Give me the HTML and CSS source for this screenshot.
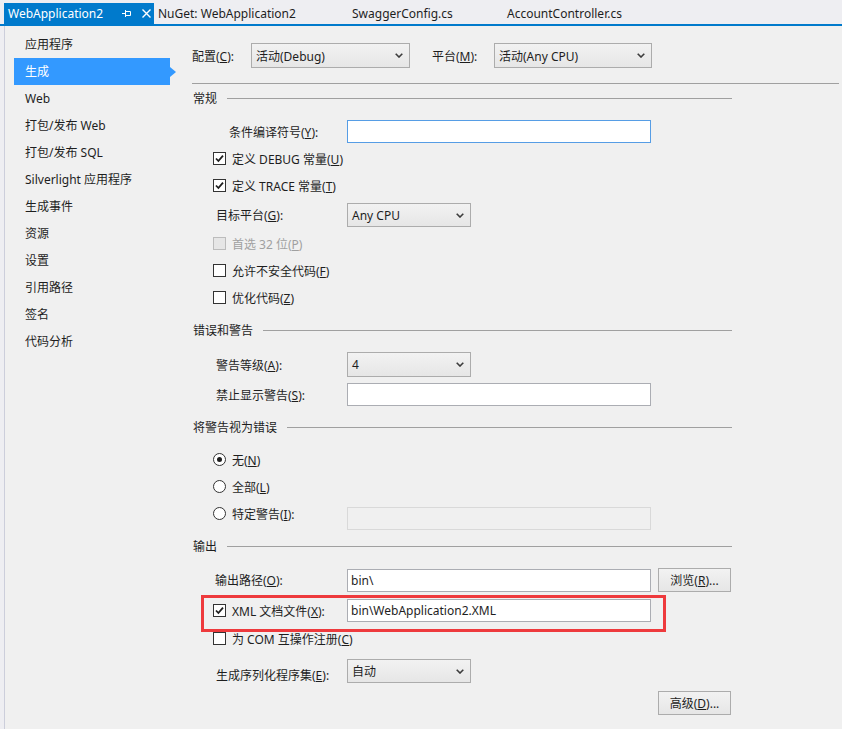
FILE: index.html
```html
<!DOCTYPE html>
<html lang="zh-CN">
<head>
<meta charset="utf-8">
<title>WebApplication2</title>
<link rel="stylesheet" href="styles.css">
</head>
<body>
<div class="tabs">
  <div class="tab tab-active">
    <span class="tab-title">WebApplication2</span>
    <svg class="tab-pin" width="10" height="9" viewBox="0 0 10 9"><path d="M0 4.5H3.5M3.5 1V8M3.5 2.5H8.5V6.5H3.5" fill="none" stroke="#fff" stroke-width="1"/></svg>
    <svg class="tab-close" width="9" height="9" viewBox="0 0 9 9"><path d="M0.5 0.5L8.5 8.5M8.5 0.5L0.5 8.5" fill="none" stroke="#fff" stroke-width="1.4"/></svg>
  </div>
  <div class="tab tab-nuget">NuGet: WebApplication2</div>
  <div class="tab tab-swagger">SwaggerConfig.cs</div>
  <div class="tab tab-account">AccountController.cs</div>
</div>
<div class="frame">
  <nav class="side">
    <div class="nav-item">应用程序</div>
    <div class="nav-item nav-selected">生成</div>
    <div class="nav-item">Web</div>
    <div class="nav-item">打包/发布 Web</div>
    <div class="nav-item">打包/发布 SQL</div>
    <div class="nav-item">Silverlight 应用程序</div>
    <div class="nav-item">生成事件</div>
    <div class="nav-item">资源</div>
    <div class="nav-item">设置</div>
    <div class="nav-item">引用路径</div>
    <div class="nav-item">签名</div>
    <div class="nav-item">代码分析</div>
  </nav>
  <main class="page">
    <div class="top-row">
      <span class="top-lbl lbl-config">配置(<u>C</u>):</span>
      <div class="select select-config"><span>活动(Debug)</span><svg class="chev" width="8" height="5" viewBox="0 0 8 5"><path d="M0.7 0.7L4 4L7.3 0.7" fill="none" stroke="#3c3c3c" stroke-width="1.6"/></svg></div>
      <span class="top-lbl lbl-platform">平台(<u>M</u>):</span>
      <div class="select select-platform"><span>活动(Any CPU)</span><svg class="chev" width="8" height="5" viewBox="0 0 8 5"><path d="M0.7 0.7L4 4L7.3 0.7" fill="none" stroke="#3c3c3c" stroke-width="1.6"/></svg></div>
    </div>
    <div class="sep"></div>

    <div class="group">
      <div class="heading heading-first"><span>常规</span><i></i></div>
      <div class="row row-input row-define">
        <span class="lbl lbl-define">条件编译符号(<u>Y</u>):</span>
        <div class="input input-focus"></div>
      </div>
      <div class="row row-check row-debug">
        <span class="cb checked"><svg width="11" height="11" viewBox="0 0 11 11"><path d="M2 5.5L4.4 8L9 2.6" fill="none" stroke="#1e1e1e" stroke-width="1.8"/></svg></span>
        <span>定义 DEBUG 常量(<u>U</u>)</span>
      </div>
      <div class="row row-check">
        <span class="cb checked"><svg width="11" height="11" viewBox="0 0 11 11"><path d="M2 5.5L4.4 8L9 2.6" fill="none" stroke="#1e1e1e" stroke-width="1.8"/></svg></span>
        <span>定义 TRACE 常量(<u>T</u>)</span>
      </div>
      <div class="row row-select row-target">
        <span class="lbl">目标平台(<u>G</u>):</span>
        <div class="select select-small"><span>Any CPU</span><svg class="chev" width="8" height="5" viewBox="0 0 8 5"><path d="M0.7 0.7L4 4L7.3 0.7" fill="none" stroke="#3c3c3c" stroke-width="1.6"/></svg></div>
      </div>
      <div class="row row-check row-prefer disabled">
        <span class="cb cb-disabled"></span>
        <span>首选 32 位(<u>P</u>)</span>
      </div>
      <div class="row row-check">
        <span class="cb"></span>
        <span>允许不安全代码(<u>F</u>)</span>
      </div>
      <div class="row row-check">
        <span class="cb"></span>
        <span>优化代码(<u>Z</u>)</span>
      </div>

      <div class="heading heading-errors"><span>错误和警告</span><i></i></div>
      <div class="row row-select row-level">
        <span class="lbl">警告等级(<u>A</u>):</span>
        <div class="select select-small select-level"><span>4</span><svg class="chev" width="8" height="5" viewBox="0 0 8 5"><path d="M0.7 0.7L4 4L7.3 0.7" fill="none" stroke="#3c3c3c" stroke-width="1.6"/></svg></div>
      </div>
      <div class="row row-input row-suppress">
        <span class="lbl">禁止显示警告(<u>S</u>):</span>
        <div class="input"></div>
      </div>

      <div class="heading heading-treat"><span>将警告视为错误</span><i></i></div>
      <div class="row row-check row-none">
        <span class="radio radio-on"></span>
        <span>无(<u>N</u>)</span>
      </div>
      <div class="row row-check">
        <span class="radio"></span>
        <span>全部(<u>L</u>)</span>
      </div>
      <div class="row row-specific">
        <div class="specific-label">
          <span class="radio"></span>
          <span class="lbl-specific">特定警告(<u>I</u>):</span>
        </div>
        <div class="input input-disabled"></div>
      </div>

      <div class="heading heading-output"><span>输出</span><i></i></div>
      <div class="row row-path">
        <span class="lbl lbl-path">输出路径(<u>O</u>):</span>
        <div class="input"><span>bin\</span></div>
        <div class="btn btn-browse">浏览(<u>R</u>)...</div>
      </div>
      <div class="row row-xml">
        <span class="cb checked"><svg width="11" height="11" viewBox="0 0 11 11"><path d="M2 5.5L4.4 8L9 2.6" fill="none" stroke="#1e1e1e" stroke-width="1.8"/></svg></span>
        <span class="lbl-xml">XML 文档文件(<u>X</u>):</span>
        <div class="input"><span>bin\WebApplication2.XML</span></div>
        <div class="highlight"></div>
      </div>
      <div class="row row-check row-com">
        <span class="cb"></span>
        <span>为 COM 互操作注册(<u>C</u>)</span>
      </div>
      <div class="row row-select row-serial">
        <span class="lbl lbl-serial">生成序列化程序集(<u>E</u>):</span>
        <div class="select select-small"><span>自动</span><svg class="chev" width="8" height="5" viewBox="0 0 8 5"><path d="M0.7 0.7L4 4L7.3 0.7" fill="none" stroke="#3c3c3c" stroke-width="1.6"/></svg></div>
      </div>
      <div class="row row-advanced">
        <div class="btn">高级(<u>D</u>)...</div>
      </div>
    </div>
  </main>
</div>
</body>
</html>
```
FILE: styles.css
```css
* { box-sizing: border-box; }
html, body { margin: 0; padding: 0; }
body {
  background: #eeeef2;
  font-family: "Noto Sans", "Noto Sans CJK SC", sans-serif;
  font-size: 12px;
  color: #1e1e1e;
  width: 842px;
  height: 729px;
  overflow: hidden;
}
u { text-decoration: underline; text-underline-offset: 1px; }

/* tabs */
.tabs {
  height: 26px;
  display: flex;
  border-bottom: 2px solid #007acc;
}
.tab {
  margin-top: 3px;
  height: 21px;
  line-height: 21px;
  padding-left: 4px;
  white-space: nowrap;
  color: #1e1e1e;
}
.tab-active {
  margin-left: 4px;
  width: 150px;
  background: #007acc;
  color: #fff;
  display: flex;
  align-items: center;
}
.tab-title { width: 110px; }
.tab-pin { margin-left: 4px; }
.tab-close { margin-left: 10px; }
.tab-nuget { width: 194px; }
.tab-swagger { width: 155px; }
.tab-account { width: 150px; }

/* frame */
.frame {
  display: flex;
  margin-left: 4px;
  border-left: 1px solid #cccedb;
  background: #f0f0f0;
  height: 703px;
}
.side {
  width: 175px;
  flex: none;
  padding: 5px 0 0 9px;
}
.nav-item {
  width: 156px;
  height: 27px;
  line-height: 27px;
  padding-left: 11px;
  white-space: nowrap;
}
.nav-selected {
  background: #3399ff;
  color: #fff;
  position: relative;
}
.nav-selected::after {
  content: "";
  position: absolute;
  right: -6px;
  top: 8.5px;
  border-left: 6px solid #3399ff;
  border-top: 5px solid transparent;
  border-bottom: 5px solid transparent;
}

/* page */
.page {
  flex: 1;
  padding: 17px 3px 0 12px;
}
.top-row {
  display: flex;
  align-items: center;
  height: 25px;
}
.top-lbl { white-space: nowrap; }
.lbl-config { width: 59px; }
.lbl-platform { width: 62px; margin-left: 22px; }
.select {
  display: flex;
  align-items: center;
  justify-content: space-between;
  height: 24px;
  padding: 0 6px 0 4px;
  border: 1px solid #acacac;
  background: linear-gradient(#f2f2f2, #e6e6e6);
  white-space: nowrap;
}
.select-config { width: 159px; height: 25px; }
.select-platform { width: 158px; height: 25px; }
.select-small { width: 124px; }
.select-level { height: 25px; }
.chev { flex: none; }

.sep {
  margin-top: 15px;
  height: 1px;
  background: #a0a0a0;
}

.group { margin-right: 107px; }
.heading {
  display: flex;
  align-items: center;
  height: 16px;
  padding-left: 1px;
}
.heading span { white-space: nowrap; }
.heading i {
  flex: 1;
  height: 1px;
  background: #a0a0a0;
  margin-left: 10px;
}
.heading-first { margin-top: 6px; }
.heading-errors { margin-top: 11px; }
.heading-treat { margin-top: 13px; }
.heading-output { margin-top: 8px; }

.row {
  display: flex;
  align-items: center;
  white-space: nowrap;
}
.row-check {
  height: 27px;
  padding-left: 21px;
}
.row-check .cb, .row-check .radio { margin-right: 6px; }
.row-input { height: 23px; padding-left: 24px; }
.row-select { height: 24px; padding-left: 24px; }
.lbl { width: 131px; }
.row-define { margin-top: 14px; padding-left: 37px; }
.lbl-define { width: 118px; }
.row-debug { margin-top: 2px; }
.row-target { margin-top: 4px; margin-bottom: 3px; }
.row-level { margin-top: 14px; height: 25px; }
.row-suppress { margin-top: 6px; }
.row-none { margin-top: 11px; }

.input {
  width: 304px;
  height: 23px;
  border: 1px solid #abadb3;
  background: #fff;
  padding-left: 3px;
  line-height: 21px;
}
.input-focus { border-color: #569de5; }
.input-disabled {
  background: #f0f0f0;
  border-color: #d9d9d9;
}

.cb {
  width: 13px;
  height: 13px;
  flex: none;
  border: 1px solid #333;
  background: #fff;
  display: flex;
  align-items: center;
  justify-content: center;
}
.cb-disabled {
  background: #e6e6e6;
  border-color: #bcbcbc;
}
.disabled { color: #a0a0a0; }
.radio {
  width: 13px;
  height: 13px;
  flex: none;
  border: 1px solid #333;
  border-radius: 50%;
  background: #fff;
  display: flex;
  align-items: center;
  justify-content: center;
}
.radio-on::after {
  content: "";
  width: 5px;
  height: 5px;
  border-radius: 50%;
  background: #1e1e1e;
}

.row-specific {
  height: 30px;
  align-items: flex-start;
  padding-left: 21px;
}
.specific-label {
  display: flex;
  align-items: center;
  height: 27px;
}
.specific-label .radio { margin-right: 6px; }
.lbl-specific { width: 115px; }
.row-specific .input { margin-top: 7px; }

.row-path {
  margin-top: 14px;
  height: 24px;
  padding-left: 23px;
}
.lbl-path { width: 132px; }
.btn {
  width: 73px;
  height: 24px;
  border: 1px solid #acacac;
  background: linear-gradient(#f2f2f2, #e6e6e6);
  display: flex;
  align-items: center;
  justify-content: center;
  white-space: nowrap;
}
.btn-browse { margin-left: 7px; }

.row-xml {
  margin-top: 7px;
  height: 23px;
  padding-left: 21px;
  position: relative;
}
.row-xml .cb { margin-right: 6px; }
.lbl-xml { width: 115px; }
.highlight {
  position: absolute;
  left: 9px;
  top: -4px;
  width: 465px;
  height: 37px;
  border: 3px solid #ee3a3d;
  pointer-events: none;
}
.row-com { margin-top: 3px; }
.row-serial { margin-top: 7px; }
.lbl-serial { padding-top: 8px; }
.row-advanced {
  margin-top: 8px;
  justify-content: flex-end;
  padding-right: 1px;
}
```
